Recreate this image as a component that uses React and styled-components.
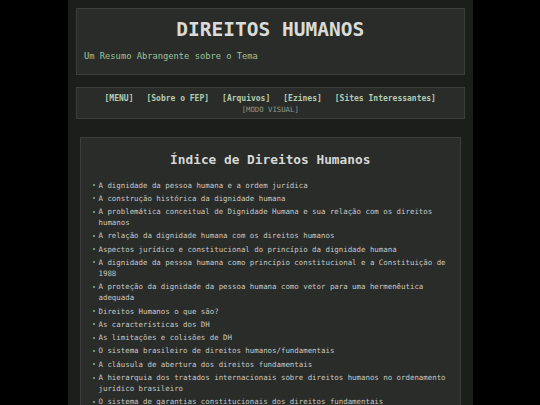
import React from "react";
import styled, { createGlobalStyle } from "styled-components";

const Global = createGlobalStyle`
  html, body { margin: 0; padding: 0; background: #000; }
  body { font-family: "DejaVu Sans Mono", "Liberation Mono", monospace; }
  * { box-sizing: border-box; }
`;

const Page = styled.div`
  width: 405px;
  margin: 0 auto;
  min-height: 405px;
  background: #1c1e1b;
  padding: 8px 8px 0 8.5px;
  display: flex;
  flex-direction: column;
`;

const Panel = styled.div`
  background: #2a2c29;
  border: 1px solid #3b3e3a;
`;

const Header = styled(Panel)`
  height: 67px;
  padding: 9px 7px 0;
`;

const Title = styled.h1`
  margin: 0;
  text-align: center;
  font-size: 19.5px;
  line-height: 23px;
  font-weight: bold;
  color: #d9dbd8;
`;

const Subtitle = styled.p`
  margin: 9px 0 0;
  font-size: 8.75px;
  line-height: 13px;
  color: #9cc49a;
`;

const Nav = styled(Panel)`
  margin-top: 12px;
  height: 32px;
  padding-top: 4.5px;
  display: flex;
  flex-direction: column;
  align-items: center;
`;

const NavRow = styled.div`
  display: flex;
  gap: 13px;
`;

const NavLink = styled.a`
  font-size: 8px;
  line-height: 11px;
  font-weight: bold;
  color: #b4ccb2;
  text-decoration: none;
  white-space: pre;
`;

const Visual = styled.a`
  font-size: 7.3px;
  line-height: 11px;
  color: #8f9a8e;
  text-decoration: none;
`;

const Content = styled(Panel)`
  margin: 18px 4px 0 4px;
  padding: 14px 10px 0 10px;
  flex: 1;
`;

const Heading = styled.h2`
  margin: 0;
  text-align: center;
  font-size: 12.8px;
  line-height: 16px;
  font-weight: bold;
  color: #d6d8d5;
`;

const List = styled.ul`
  list-style: none;
  margin: 11.5px 0 0;
  padding: 0 0 0 7.5px;
`;

const Item = styled.li`
  position: relative;
  font-size: 7.4px;
  line-height: 11px;
  color: #c6c8c5;
  margin-bottom: 2.3px;
  &::before {
    content: "";
    position: absolute;
    left: -6px;
    top: 4.5px;
    width: 2px;
    height: 2px;
    border-radius: 50%;
    background: #93b491;
  }
`;

const links = ["[MENU]", "[Sobre o FEP]", "[Arquivos]", "[Ezines]", "[Sites Interessantes]"];

const items = [
  "A dignidade da pessoa humana e a ordem jurídica",
  "A construção histórica da dignidade humana",
  "A problemática conceitual de Dignidade Humana e sua relação com os direitos humanos",
  "A relação da dignidade humana com os direitos humanos",
  "Aspectos jurídico e constitucional do princípio da dignidade humana",
  "A dignidade da pessoa humana como princípio constitucional e a Constituição de 1988",
  "A proteção da dignidade da pessoa humana como vetor para uma hermenêutica adequada",
  "Direitos Humanos o que são?",
  "As características dos DH",
  "As limitações e colisões de DH",
  "O sistema brasileiro de direitos humanos/fundamentais",
  "A cláusula de abertura dos direitos fundamentais",
  "A hierarquia dos tratados internacionais sobre direitos humanos no ordenamento jurídico brasileiro",
  "O sistema de garantias constitucionais dos direitos fundamentais",
];

export default function App() {
  return (
    <>
      <Global />
      <Page>
        <Header>
          <Title>DIREITOS HUMANOS</Title>
          <Subtitle>Um Resumo Abrangente sobre o Tema</Subtitle>
        </Header>
        <Nav>
          <NavRow>
            {links.map((l) => (
              <NavLink key={l} href="#">{l}</NavLink>
            ))}
          </NavRow>
          <Visual href="#">[MODO VISUAL]</Visual>
        </Nav>
        <Content>
          <Heading>Índice de Direitos Humanos</Heading>
          <List>
            {items.map((t) => (
              <Item key={t}>{t}</Item>
            ))}
          </List>
        </Content>
      </Page>
    </>
  );
}
